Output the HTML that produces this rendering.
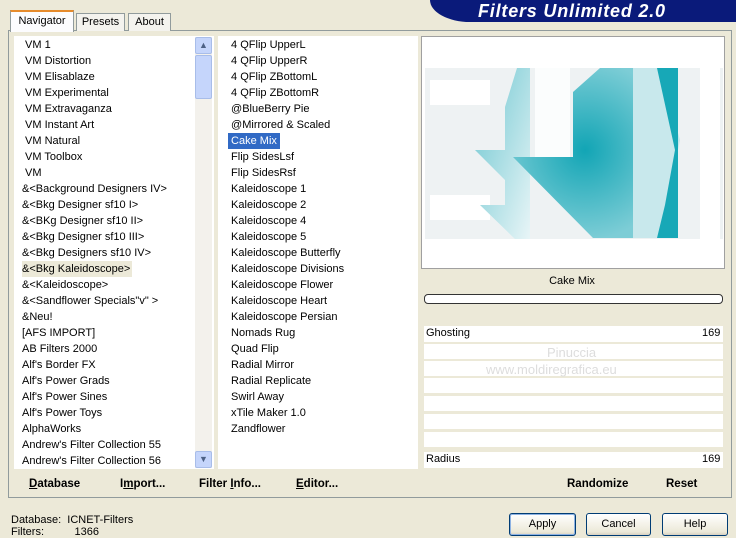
<!DOCTYPE html>
<html><head><style>
*{margin:0;padding:0;box-sizing:border-box}
body{width:736px;height:537px;background:#ece9d8;font-family:"Liberation Sans",sans-serif;font-size:11px;color:#000;position:relative;overflow:hidden}
.a{position:absolute}
.list div{height:16px;line-height:16px;white-space:nowrap}
.btn{position:absolute;border:1px solid #003c74;border-radius:3px;background:linear-gradient(#fff,#ece9d8 85%,#d6d0c0);text-align:center;line-height:21px;font-size:11px}
.bb{font-weight:bold;font-size:11.5px}
</style></head><body>
<div class="a" style="left:430px;top:0;width:306px;height:22px;background:#0a1a7a;border-bottom-left-radius:40px 22px;"></div>
<div class="a" style="left:478px;top:1px;color:#fff;font-weight:bold;font-style:italic;font-size:18px;letter-spacing:0.8px">Filters Unlimited 2.0</div>
<div class="a" style="left:8px;top:30px;width:724px;height:468px;border:1px solid #919b9c;background:#fcfcfe"></div>
<div class="a" style="left:9px;top:31px;width:722px;height:466px;background:#ece9d8"></div>
<div class="a" style="left:10px;top:10px;width:64px;height:22px;border:1px solid #919b9c;border-bottom:none;border-top:2px solid #e68b2c;background:#fcfcfe;text-align:center;line-height:19px">Navigator</div>
<div class="a" style="left:76px;top:13px;width:49px;height:18px;border:1px solid #919b9c;border-bottom:none;background:#f4f3ee;text-align:center;line-height:17px">Presets</div>
<div class="a" style="left:128px;top:13px;width:43px;height:18px;border:1px solid #919b9c;border-bottom:none;background:#f4f3ee;text-align:center;line-height:17px">About</div>
<div class="a" style="left:14px;top:36px;width:200px;height:433px;background:#fff"></div>
<div class="a list" style="left:22px;top:37px">
<div>&nbsp;VM 1</div><div>&nbsp;VM Distortion</div><div>&nbsp;VM Elisablaze</div><div>&nbsp;VM Experimental</div><div>&nbsp;VM Extravaganza</div><div>&nbsp;VM Instant Art</div><div>&nbsp;VM Natural</div><div>&nbsp;VM Toolbox</div><div>&nbsp;VM</div><div>&amp;&lt;Background Designers IV&gt;</div><div>&amp;&lt;Bkg Designer sf10 I&gt;</div><div>&amp;&lt;BKg Designer sf10 II&gt;</div><div>&amp;&lt;Bkg Designer sf10 III&gt;</div><div>&amp;&lt;Bkg Designers sf10 IV&gt;</div><div style="background:#ece9d8;width:110px">&amp;&lt;Bkg Kaleidoscope&gt;</div><div>&amp;&lt;Kaleidoscope&gt;</div><div>&amp;&lt;Sandflower Specials"v" &gt;</div><div>&amp;Neu!</div><div>[AFS IMPORT]</div><div>AB Filters 2000</div><div>Alf's Border FX</div><div>Alf's Power Grads</div><div>Alf's Power Sines</div><div>Alf's Power Toys</div><div>AlphaWorks</div><div>Andrew's Filter Collection 55</div><div>Andrew's Filter Collection 56</div>
</div>
<div class="a" style="left:195px;top:37px;width:17px;height:431px;background:#f3f1ec"></div>
<div class="a" style="left:195px;top:37px;width:17px;height:17px;background:#c5d5fb;border:1px solid #a8bde9;border-radius:2px;color:#4d6185;font-size:9px;text-align:center;line-height:15px">&#9650;</div>
<div class="a" style="left:195px;top:55px;width:17px;height:44px;background:#c5d5fb;border:1px solid #a8bde9;border-radius:2px"></div>
<div class="a" style="left:195px;top:451px;width:17px;height:17px;background:#c5d5fb;border:1px solid #a8bde9;border-radius:2px;color:#4d6185;font-size:9px;text-align:center;line-height:15px">&#9660;</div>
<div class="a" style="left:218px;top:36px;width:200px;height:433px;background:#fff"></div>
<div class="a list" style="left:228px;top:37px">
<div>&nbsp;4 QFlip UpperL</div><div>&nbsp;4 QFlip UpperR</div><div>&nbsp;4 QFlip ZBottomL</div><div>&nbsp;4 QFlip ZBottomR</div><div>&nbsp;@BlueBerry Pie</div><div>&nbsp;@Mirrored &amp; Scaled</div><div style="background:#316ac5;color:#fff;width:52px">&nbsp;Cake Mix</div><div>&nbsp;Flip SidesLsf</div><div>&nbsp;Flip SidesRsf</div><div>&nbsp;Kaleidoscope 1</div><div>&nbsp;Kaleidoscope 2</div><div>&nbsp;Kaleidoscope 4</div><div>&nbsp;Kaleidoscope 5</div><div>&nbsp;Kaleidoscope Butterfly</div><div>&nbsp;Kaleidoscope Divisions</div><div>&nbsp;Kaleidoscope Flower</div><div>&nbsp;Kaleidoscope Heart</div><div>&nbsp;Kaleidoscope Persian</div><div>&nbsp;Nomads Rug</div><div>&nbsp;Quad Flip</div><div>&nbsp;Radial Mirror</div><div>&nbsp;Radial Replicate</div><div>&nbsp;Swirl Away</div><div>&nbsp;xTile Maker 1.0</div><div>&nbsp;Zandflower</div>
</div>
<div class="a" style="left:421px;top:36px;width:304px;height:233px;background:#fff;border:1px solid #a0a0a0"></div>
<svg class="a" style="left:425px;top:68px" width="298" height="171" viewBox="425 68 298 171">
<defs><radialGradient id="g" cx="585" cy="150" r="90" gradientUnits="userSpaceOnUse"><stop offset="0" stop-color="#12a5b5"/><stop offset="1" stop-color="#7dcdd6"/></radialGradient>
<linearGradient id="l" x1="0" y1="0" x2="1" y2="1"><stop offset="0" stop-color="#6cc6d0"/><stop offset="1" stop-color="#e8f5f7"/></linearGradient></defs>
<rect x="425" y="68" width="298" height="171" fill="#eef2f3"/>
<rect x="430" y="80" width="60" height="25" fill="#fff"/><rect x="430" y="195" width="60" height="25" fill="#fff"/>
<rect x="535" y="68" width="35" height="90" fill="#fbfdfd"/>
<rect x="700" y="68" width="20" height="171" fill="#fff"/>
<polygon points="475,150 505,150 505,107 517,68 530,68 530,239 515,239 480,205 505,205 505,180" fill="url(#l)"/>
<polygon points="573,92 600,68 633,68 633,238 593,238 513,157 573,157" fill="url(#g)"/>
<polygon points="633,68 660,68 680,140 660,238 633,238" fill="#c8e8ec"/>
<polygon points="657,68 678,68 678,238 657,238 665,205 675,150" fill="#17a8b7"/>
</svg>
<div class="a" style="left:421px;top:270px;width:304px;height:200px;background:#ece9d8"></div>
<div class="a" style="left:421px;top:275px;width:302px;text-align:center">Cake Mix</div>
<div class="a" style="left:424px;top:294px;width:299px;height:10px;border:1px solid #333;border-radius:4px;background:#fff"></div>
<div class="a" style="left:424px;top:326px;width:299px;height:16px;background:#fff"></div>
<div class="a" style="left:426px;top:327px">Ghosting</div><div class="a" style="left:702px;top:327px">169</div>
<div class="a" style="left:424px;top:344px;width:299px;height:15px;background:#fff"></div>
<div class="a" style="left:424px;top:361px;width:299px;height:15px;background:#fff"></div>
<div class="a" style="left:424px;top:378px;width:299px;height:15px;background:#fff"></div>
<div class="a" style="left:424px;top:396px;width:299px;height:15px;background:#fff"></div>
<div class="a" style="left:424px;top:414px;width:299px;height:15px;background:#fff"></div>
<div class="a" style="left:424px;top:432px;width:299px;height:15px;background:#fff"></div>
<div class="a" style="left:424px;top:452px;width:299px;height:16px;background:#fff"></div>
<div class="a" style="left:426px;top:453px">Radius</div><div class="a" style="left:702px;top:453px">169</div>
<div class="a" style="left:547px;top:345px;color:#ddd;font-size:13px">Pinuccia</div>
<div class="a" style="left:486px;top:362px;color:#ddd;font-size:13px">www.moldiregrafica.eu</div>
<div class="a bb" style="left:567px;top:478px">Randomize</div>
<div class="a bb" style="left:666px;top:478px">Reset</div>
<div class="a bb" style="left:29px;top:478px"><u>D</u>atabase</div>
<div class="a bb" style="left:120px;top:478px">I<u>m</u>port...</div>
<div class="a bb" style="left:199px;top:478px">Filter <u>I</u>nfo...</div>
<div class="a bb" style="left:296px;top:478px"><u>E</u>ditor...</div>
<div class="a" style="left:11px;top:514px;line-height:12px">Database:&nbsp; ICNET-Filters<br>Filters:&nbsp;&nbsp;&nbsp;&nbsp;&nbsp;&nbsp;&nbsp;&nbsp;&nbsp; 1366</div>
<div class="btn" style="left:509px;top:513px;width:67px;height:23px;box-shadow:inset 0 0 0 1px #8db2e3">Apply</div>
<div class="btn" style="left:586px;top:513px;width:65px;height:23px">Cancel</div>
<div class="btn" style="left:662px;top:513px;width:66px;height:23px">Help</div>
</body></html>
